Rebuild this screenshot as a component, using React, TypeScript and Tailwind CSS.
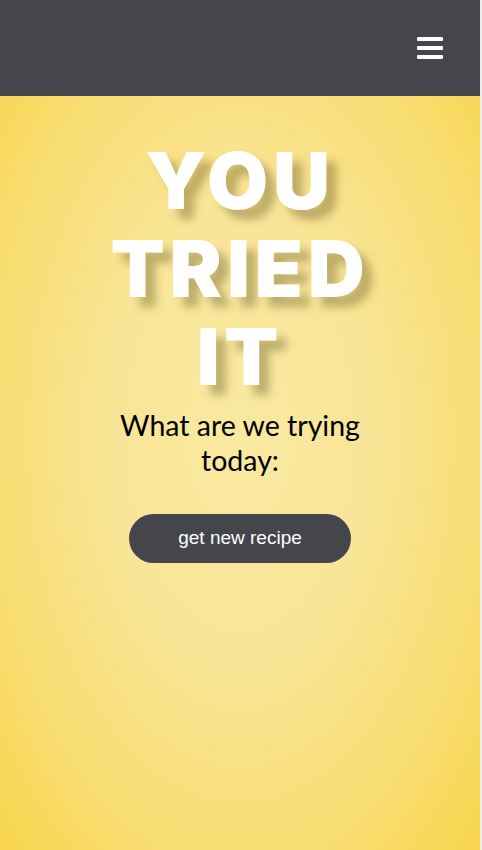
import { FC } from "react";

const Header: FC = () => {
  return (
    <header className="h-24 bg-[#45464c] flex items-center justify-end pr-[37px]">
      <button className="flex flex-col gap-[5px] w-[26px]" aria-label="menu">
        <span className="block h-1 w-full bg-white rounded-[1px]" />
        <span className="block h-1 w-full bg-white rounded-[1px]" />
        <span className="block h-1 w-full bg-white rounded-[1px]" />
      </button>
    </header>
  );
};

const App: FC = () => {
  return (
    <div className="min-h-[850px] bg-[#ececec] font-['Liberation_Sans',Arial,sans-serif]">
      <div className="w-[480px] min-h-[850px] flex flex-col">
        <Header />
        <main className="flex-1 flex flex-col items-center pt-[40px] bg-[radial-gradient(ellipse_at_50%_45%,#f9e9a0_0%,#f9e597_38%,#f8dc6c_78%,#f8d54b_100%)]">
          <h1 className="text-center text-white font-black text-[79px] leading-[88px] tracking-[0.06em] font-['Inter',sans-serif] [text-shadow:10px_10px_9px_rgba(80,70,20,0.35)]">
            YOU
            <br />
            TRIED
            <br />
            IT
          </h1>
          <p className="mt-[8px] text-center text-black text-[28.5px] leading-[35px] font-['Lato',sans-serif] w-[270px]">
            What are we trying today:
          </p>
          <button className="mt-[36px] w-[222px] h-[49px] rounded-full bg-[#45464c] text-white text-[19px]">
            get new recipe
          </button>
        </main>
      </div>
    </div>
  );
};

export default App;
